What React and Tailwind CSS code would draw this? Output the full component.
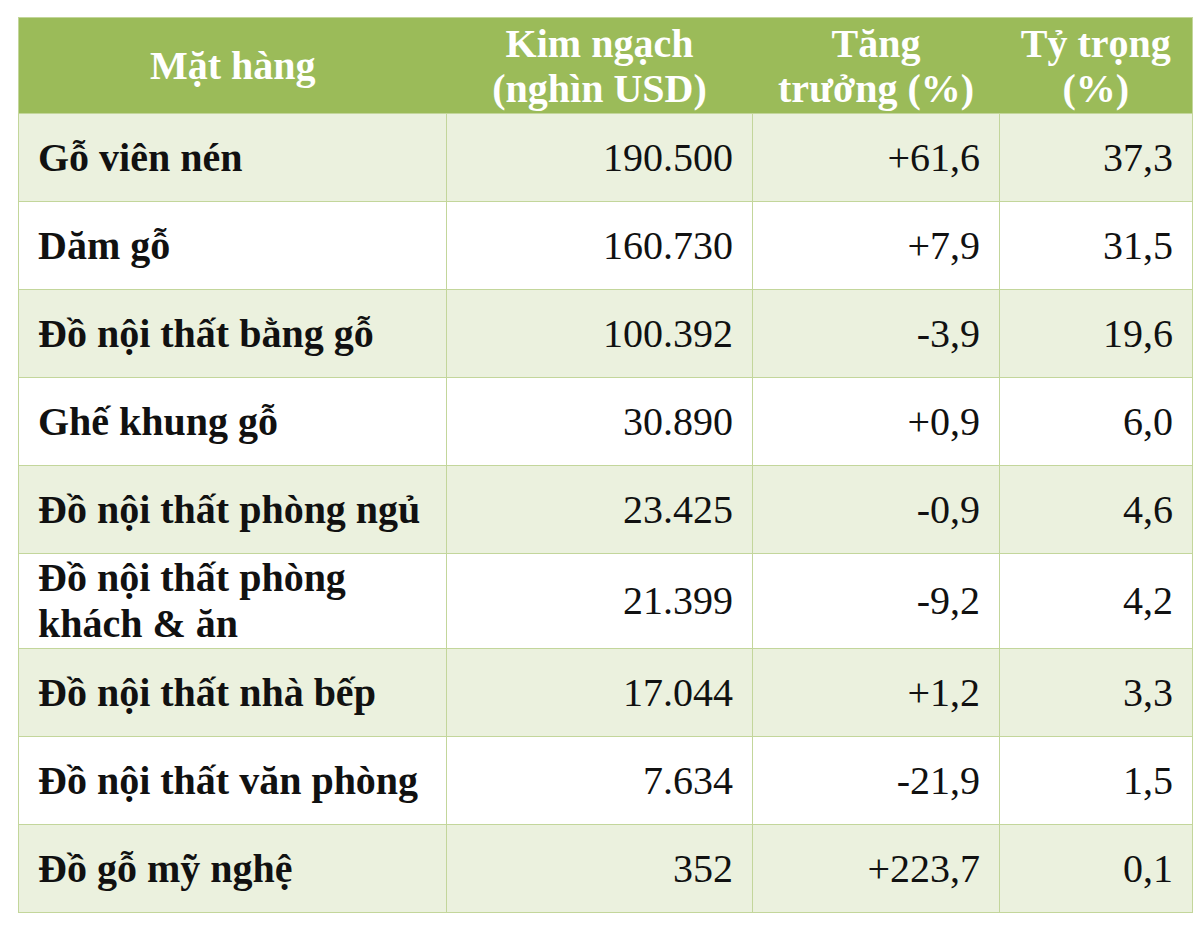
import React from "react";

const rows = [
  ["Gỗ viên nén", "190.500", "+61,6", "37,3"],
  ["Dăm gỗ", "160.730", "+7,9", "31,5"],
  ["Đồ nội thất bằng gỗ", "100.392", "-3,9", "19,6"],
  ["Ghế khung gỗ", "30.890", "+0,9", "6,0"],
  ["Đồ nội thất phòng ngủ", "23.425", "-0,9", "4,6"],
  ["Đồ nội thất phòng khách & ăn", "21.399", "-9,2", "4,2"],
  ["Đồ nội thất nhà bếp", "17.044", "+1,2", "3,3"],
  ["Đồ nội thất văn phòng", "7.634", "-21,9", "1,5"],
  ["Đồ gỗ mỹ nghệ", "352", "+223,7", "0,1"],
];

export default function App() {
  return (
    <div className="min-h-screen bg-white pt-[17px] pl-[18px] font-serif text-[40px] text-[#111]">
      <table className="w-[1174px] table-fixed border-collapse border border-[#c3d69b] [font-family:'Liberation_Serif']">
        <colgroup>
          <col className="w-[428px]" />
          <col className="w-[306px]" />
          <col className="w-[247px]" />
          <col className="w-[193px]" />
        </colgroup>
        <thead>
          <tr className="h-[96px] bg-[#9bbb59] text-white font-bold leading-[45px]">
            <th className="px-4 text-center font-bold">Mặt hàng</th>
            <th className="px-2 text-center font-bold">
              Kim ngạch
              <br />
              (nghìn USD)
            </th>
            <th className="px-2 text-center font-bold">
              Tăng
              <br />
              trưởng (%)
            </th>
            <th className="px-2 text-center font-bold">
              Tỷ trọng
              <br />
              (%)
            </th>
          </tr>
        </thead>
        <tbody>
          {rows.map((r, i) => (
            <tr
              key={r[0]}
              className={`${i === 5 ? "h-[95px]" : "h-[88px]"} ${
                i % 2 === 0 ? "bg-[#ebf1de]" : "bg-white"
              }`}
            >
              <td className="border border-[#c3d69b] pl-[19px] pr-3 font-bold leading-[46px]">
                {r[0]}
              </td>
              <td className="border border-[#c3d69b] px-[19px] text-right">{r[1]}</td>
              <td className="border border-[#c3d69b] px-[19px] text-right">{r[2]}</td>
              <td className="border border-[#c3d69b] px-[19px] text-right">{r[3]}</td>
            </tr>
          ))}
        </tbody>
      </table>
    </div>
  );
}
